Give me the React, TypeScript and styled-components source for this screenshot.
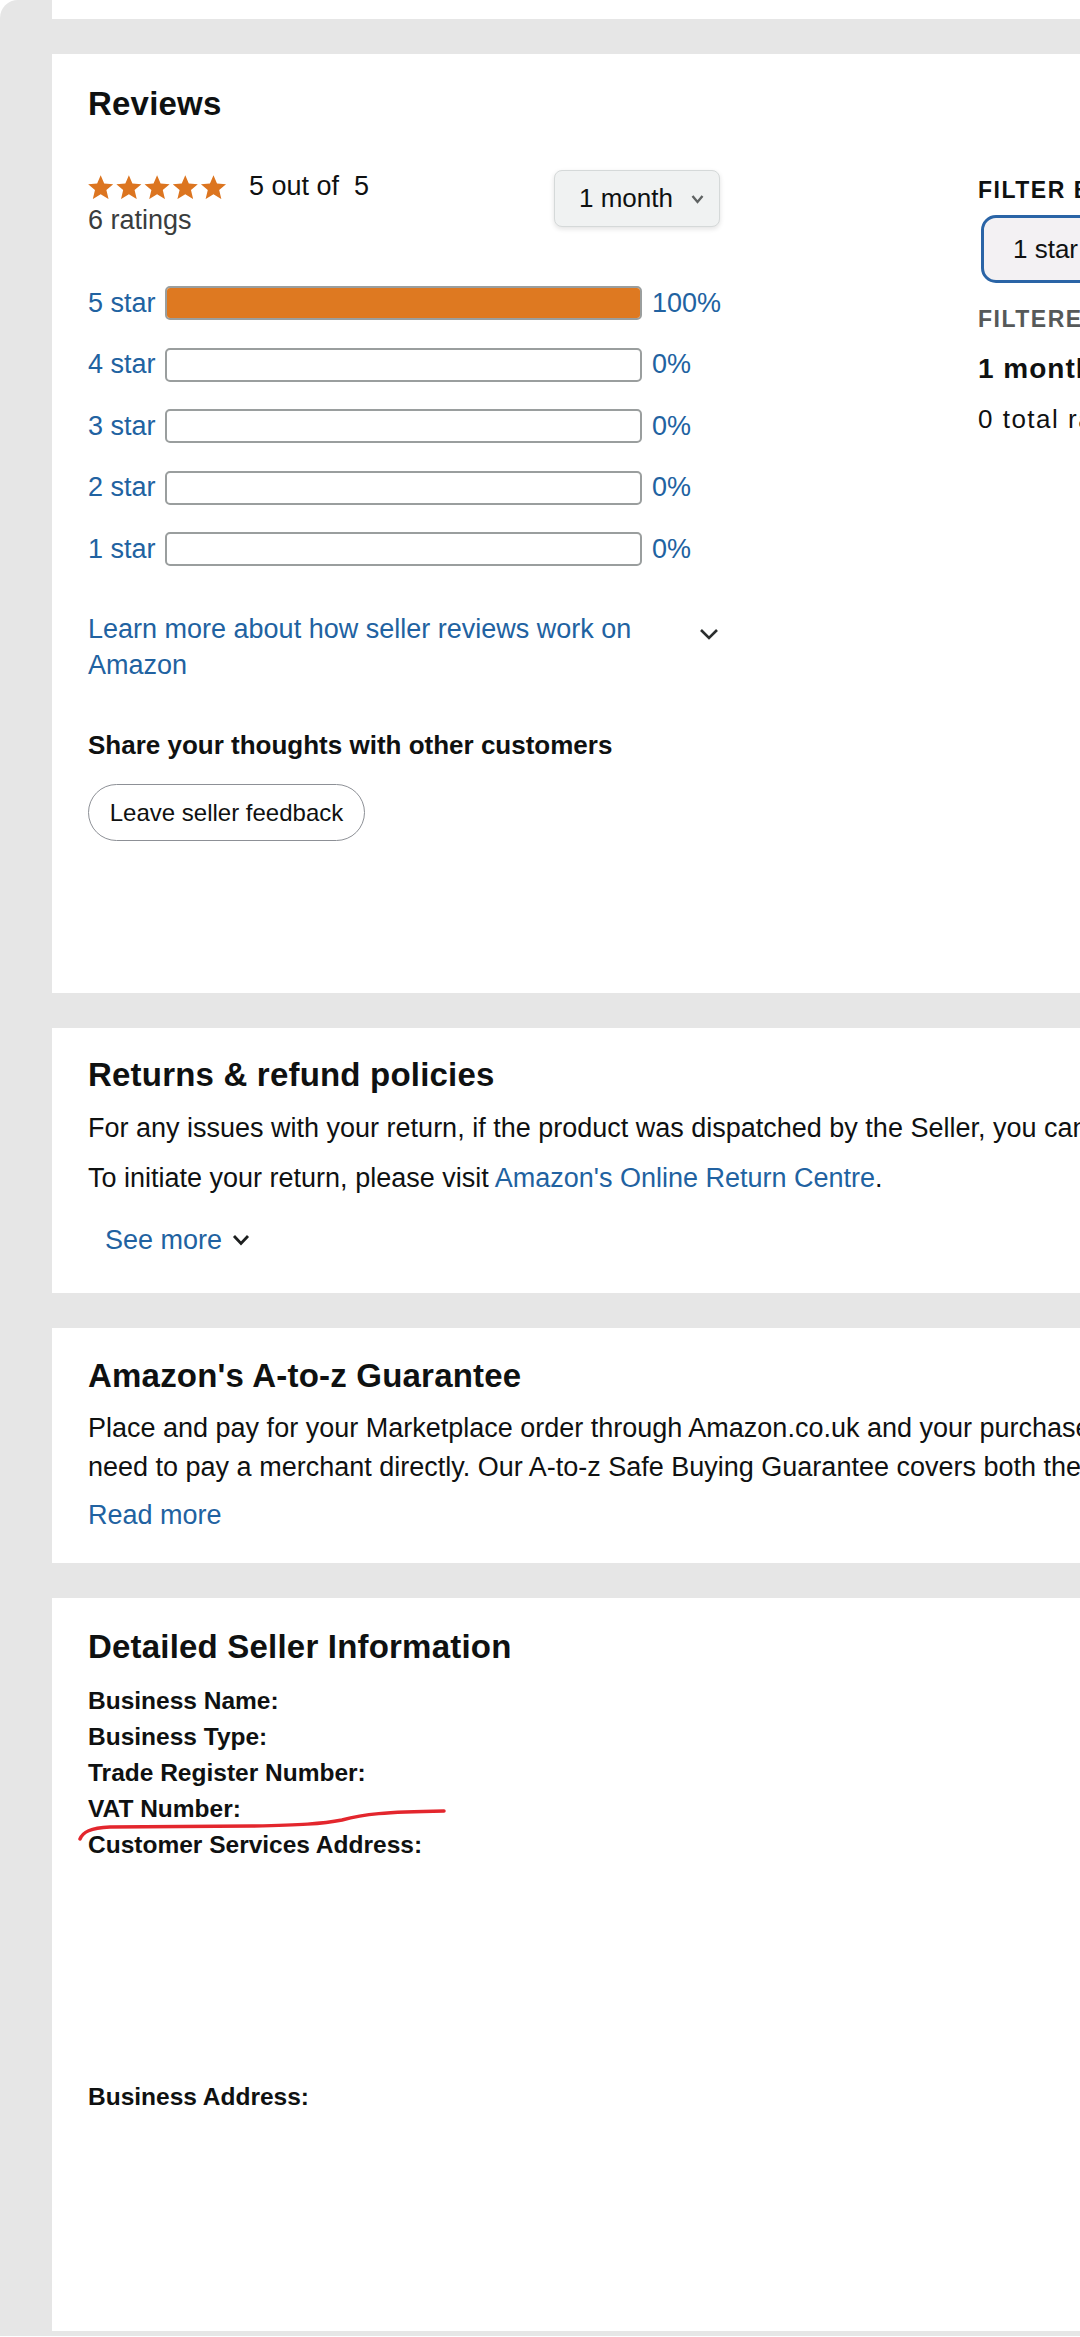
import React from 'react'
import styled, { createGlobalStyle } from 'styled-components'

const LINK = '#2162a1'
const INK = '#0f1111'

const GlobalStyle = createGlobalStyle`
  html, body {
    margin: 0;
    padding: 0;
    background: #ffffff;
  }

  body {
    font-family: 'Liberation Sans', Arial, sans-serif;
    color: ${INK};
  }
`

const Page = styled.main`
  width: 1080px;
  overflow: hidden;
  display: flex;
  flex-direction: column;
  gap: 35px;
  padding: 0 0 5px 52px;
  box-sizing: border-box;
  background: #e6e6e6;
  border-top-left-radius: 18px;
`

const Card = styled.section<{ $top: number; $bottom: number }>`
  position: relative;
  background: #ffffff;
  padding: ${(p) => p.$top}px 0 ${(p) => p.$bottom}px 36px;
  white-space: nowrap;
`

const CardTail = styled.div`
  height: 19px;
  background: #ffffff;
`

const SectionTitle = styled.h2`
  margin: 0;
  font-size: 33px;
  line-height: 40px;
  font-weight: 700;
  letter-spacing: 0.2px;
`

const ReviewsBody = styled.div`
  display: flex;
  align-items: flex-start;
  gap: 258px;
  margin-top: 46px;
`

const RatingsColumn = styled.div`
  width: 632px;
  flex-shrink: 0;
  display: flex;
  flex-direction: column;
`

const SummaryRow = styled.div`
  display: flex;
  justify-content: space-between;
  align-items: flex-start;
`

const StarLine = styled.div`
  display: flex;
  align-items: center;
  gap: 20px;
  height: 32px;
  font-size: 27px;
`

const RatingCount = styled.div`
  font-size: 27px;
  line-height: 36px;
  color: #3a3d3d;
`

const RangeSelect = styled.button`
  display: flex;
  align-items: center;
  justify-content: space-between;
  width: 166px;
  height: 57px;
  padding: 0 15px 0 24px;
  box-sizing: border-box;
  background: #f0f2f2;
  border: 1px solid #d5d9d9;
  border-radius: 8px;
  box-shadow: 0 2px 5px rgba(15, 17, 17, 0.12);
  font-family: inherit;
  font-size: 26px;
  color: ${INK};
`

const Histogram = styled.div`
  display: flex;
  flex-direction: column;
  gap: 27.5px;
  margin-top: 48px;
`

const HistRow = styled.div`
  display: grid;
  grid-template-columns: 77px 477px 1fr;
  align-items: center;
  height: 34px;
  font-size: 27px;
  color: ${LINK};
`

const Bar = styled.div`
  height: 34px;
  box-sizing: border-box;
  border: 2px solid #9a9e9e;
  border-radius: 5px;
  overflow: hidden;
  background: #ffffff;
`

const BarFill = styled.div`
  height: 100%;
  background: #de7921;
`

const Percent = styled.span`
  padding-left: 10px;
`

const LearnMore = styled.div`
  display: flex;
  justify-content: space-between;
  align-items: flex-start;
  margin-top: 45px;
`

const LearnText = styled.a`
  width: 580px;
  white-space: normal;
  font-size: 27px;
  line-height: 36px;
  color: ${LINK};
  text-decoration: none;
`

const Chevron = styled.svg<{ $mt: number }>`
  margin-top: ${(p) => p.$mt}px;
  flex-shrink: 0;
`

const ShareHeading = styled.h3`
  margin: 45px 0 0;
  font-size: 26px;
  line-height: 34px;
  font-weight: 700;
`

const FeedbackButton = styled.button`
  margin-top: 22px;
  width: 277px;
  height: 57px;
  padding: 0;
  background: #ffffff;
  border: 1.5px solid #8d9096;
  border-radius: 29px;
  font-family: inherit;
  font-size: 24px;
  color: ${INK};
`

const FilterColumn = styled.div`
  display: flex;
  flex-direction: column;
  padding-top: 6px;
`

const FilterLabel = styled.div<{ $muted?: boolean }>`
  font-size: 23px;
  line-height: 28px;
  font-weight: 700;
  letter-spacing: 1.5px;
  color: ${(p) => (p.$muted ? '#565959' : INK)};
`

const StarFilter = styled.button`
  display: flex;
  align-items: center;
  width: 240px;
  height: 68px;
  margin: 11px 0 22px 3px;
  padding: 0 0 0 29px;
  box-sizing: border-box;
  background: #f3f1f3;
  border: 3px solid #2a64a6;
  border-radius: 15px;
  font-family: inherit;
  font-size: 26px;
  color: ${INK};
`

const PeriodValue = styled.div`
  margin-top: 19px;
  font-size: 28px;
  line-height: 34px;
  font-weight: 700;
  letter-spacing: 1px;
`

const TotalCount = styled.div`
  margin-top: 17px;
  font-size: 26px;
  line-height: 32px;
  letter-spacing: 1.5px;
`

const Paragraph = styled.p<{ $mt: number; $lh: number }>`
  margin: ${(p) => p.$mt}px 0 0;
  font-size: 27px;
  line-height: ${(p) => p.$lh}px;
`

const TextLink = styled.a`
  color: ${LINK};
  text-decoration: none;
`

const SeeMore = styled.button`
  display: flex;
  align-items: center;
  gap: 8px;
  margin-top: 26px;
  padding: 0 0 0 17px;
  background: none;
  border: none;
  font-family: inherit;
  font-size: 27px;
  line-height: 36px;
  color: ${LINK};
`

const ReadMore = styled(TextLink)`
  display: block;
  margin-top: 10px;
  font-size: 27px;
  line-height: 36px;
`

const InfoList = styled.dl`
  margin: 16px 0 0;
`

const InfoLine = styled.dt`
  font-size: 24.5px;
  line-height: 36px;
  font-weight: 700;
`

const AddressSpace = styled.dd`
  margin: 0;
  height: 216px;
`

const Annotation = styled.svg`
  position: absolute;
  left: 0;
  top: 0;
  pointer-events: none;
`

const STAR = '12,1 15.1,8.3 23,8.9 17,14 18.9,22 12,17.8 5.1,22 7,14 1,8.9 8.9,8.3'

function Stars() {
  return (
    <svg width="141" height="25" viewBox="0 0 141 25">
      {[0, 1, 2, 3, 4].map((i) => (
        <polygon
          key={i}
          points={STAR}
          fill="#dc7520"
          transform={`translate(${i * 28.2 - 1} 0) scale(1.14)`}
        />
      ))}
    </svg>
  )
}

const histogram = [
  { label: '5 star', pct: 100 },
  { label: '4 star', pct: 0 },
  { label: '3 star', pct: 0 },
  { label: '2 star', pct: 0 },
  { label: '1 star', pct: 0 },
]

const sellerFields = ['Business Name:', 'Business Type:', 'Trade Register Number:', 'VAT Number:']

export default function App() {
  return (
    <>
      <GlobalStyle />
      <Page>
        <CardTail />

        <Card $top={30} $bottom={152}>
          <SectionTitle>Reviews</SectionTitle>
          <ReviewsBody>
            <RatingsColumn>
              <SummaryRow>
                <div>
                  <StarLine>
                    <Stars />
                    <span>5 out of&nbsp; 5</span>
                  </StarLine>
                  <RatingCount>6 ratings</RatingCount>
                </div>
                <RangeSelect>
                  1 month
                  <svg width="13" height="10" viewBox="0 0 13 10">
                    <path d="M1.5 2 L6.5 8 L11.5 2" fill="none" stroke="#5f6363" strokeWidth="2.4" />
                  </svg>
                </RangeSelect>
              </SummaryRow>

              <Histogram>
                {histogram.map((row) => (
                  <HistRow key={row.label}>
                    <span>{row.label}</span>
                    <Bar>
                      <BarFill style={{ width: `${row.pct}%` }} />
                    </Bar>
                    <Percent>{row.pct}%</Percent>
                  </HistRow>
                ))}
              </Histogram>

              <LearnMore>
                <LearnText>Learn more about how seller reviews work on Amazon</LearnText>
                <Chevron $mt={16} width="22" height="14" viewBox="0 0 22 14">
                  <path d="M3 3 L11 11 L19 3" fill="none" stroke="#2b2e2e" strokeWidth="2.6" />
                </Chevron>
              </LearnMore>

              <ShareHeading>Share your thoughts with other customers</ShareHeading>
              <div>
                <FeedbackButton>Leave seller feedback</FeedbackButton>
              </div>
            </RatingsColumn>

            <FilterColumn>
              <FilterLabel>FILTER BY</FilterLabel>
              <StarFilter>1 star</StarFilter>
              <FilterLabel $muted>FILTERED BY</FilterLabel>
              <PeriodValue>1 month</PeriodValue>
              <TotalCount>0 total ratings, 0 with reviews</TotalCount>
            </FilterColumn>
          </ReviewsBody>
        </Card>

        <Card $top={27} $bottom={35}>
          <SectionTitle>Returns &amp; refund policies</SectionTitle>
          <Paragraph $mt={15} $lh={36}>
            For any issues with your return, if the product was dispatched by the Seller, you can contact the Seller
            directly.
          </Paragraph>
          <Paragraph $mt={14} $lh={36}>
            To initiate your return, please visit <TextLink>Amazon's Online Return Centre</TextLink>.
          </Paragraph>
          <SeeMore>
            See more
            <svg width="22" height="14" viewBox="0 0 22 14">
              <path d="M4 3 L11 10.5 L18 3" fill="none" stroke="#1d1f1f" strokeWidth="2.8" />
            </svg>
          </SeeMore>
        </Card>

        <Card $top={28} $bottom={30}>
          <SectionTitle>Amazon's A-to-z Guarantee</SectionTitle>
          <Paragraph $mt={13} $lh={39}>
            Place and pay for your Marketplace order through Amazon.co.uk and your purchase is covered by the A-to-z
            Guarantee. You never
            <br />
            need to pay a merchant directly. Our A-to-z Safe Buying Guarantee covers both the timely delivery and the
            condition of your items.
          </Paragraph>
          <ReadMore>Read more</ReadMore>
        </Card>

        <Card $top={29} $bottom={0}>
          <SectionTitle>Detailed Seller Information</SectionTitle>
          <InfoList>
            {sellerFields.map((field) => (
              <InfoLine key={field}>{field}</InfoLine>
            ))}
            <InfoLine>Customer Services Address:</InfoLine>
            <AddressSpace />
            <InfoLine>Business Address:</InfoLine>
            <AddressSpace />
          </InfoList>
          <Annotation width="460" height="300" viewBox="0 0 460 300">
            <path
              d="M28 241 C31 234 38 230 58 229 L200 228 C248 227 270 226 290 222 C312 216 332 214 392 213"
              fill="none"
              stroke="#e3262d"
              strokeWidth="3.5"
              strokeLinecap="round"
            />
          </Annotation>
        </Card>
      </Page>
    </>
  )
}
